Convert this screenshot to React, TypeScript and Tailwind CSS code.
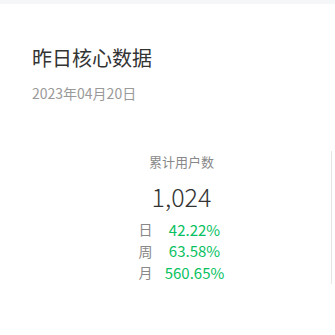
const rows = [
  { label: '日', value: '42.22%' },
  { label: '周', value: '63.58%' },
  { label: '月', value: '560.65%' },
];

const App = () => {
  return (
    <div className="w-[335px] h-[335px] bg-white overflow-hidden" style={{ fontFamily: '"Noto Sans CJK SC", "Noto Sans", sans-serif' }}>
      <div className="h-[4px] bg-[#f5f6f8]"></div>
      <div className="pl-8 pt-[38px]">
        <h1 className="text-[20px] leading-[32px] text-[#333]">昨日核心数据</h1>
        <p className="mt-[9px] text-[14px] leading-[20px] text-[#999]">2023年04月20日</p>

        <div className="mt-[48px] w-[300px] border-r border-[#e5e5e5] flex flex-col items-center">
          <div className="mt-[1px] text-[13px] leading-[20px] text-[#888]">累计用户数</div>
          <div className="mt-[9px] text-[25px] leading-[30px] font-light text-[#333]">1,024</div>
          <div className="mt-[8px] flex flex-col">
            {rows.map((r) => (
              <div key={r.label} className="flex items-center gap-[12px] h-[21.5px]">
                <span className="w-[14px] text-[14px] text-[#888]">{r.label}</span>
                <span className="w-[60px] text-center text-[15px] text-[#07c160]">{r.value}</span>
              </div>
            ))}
          </div>
        </div>
      </div>
    </div>
  );
};

export default App;
